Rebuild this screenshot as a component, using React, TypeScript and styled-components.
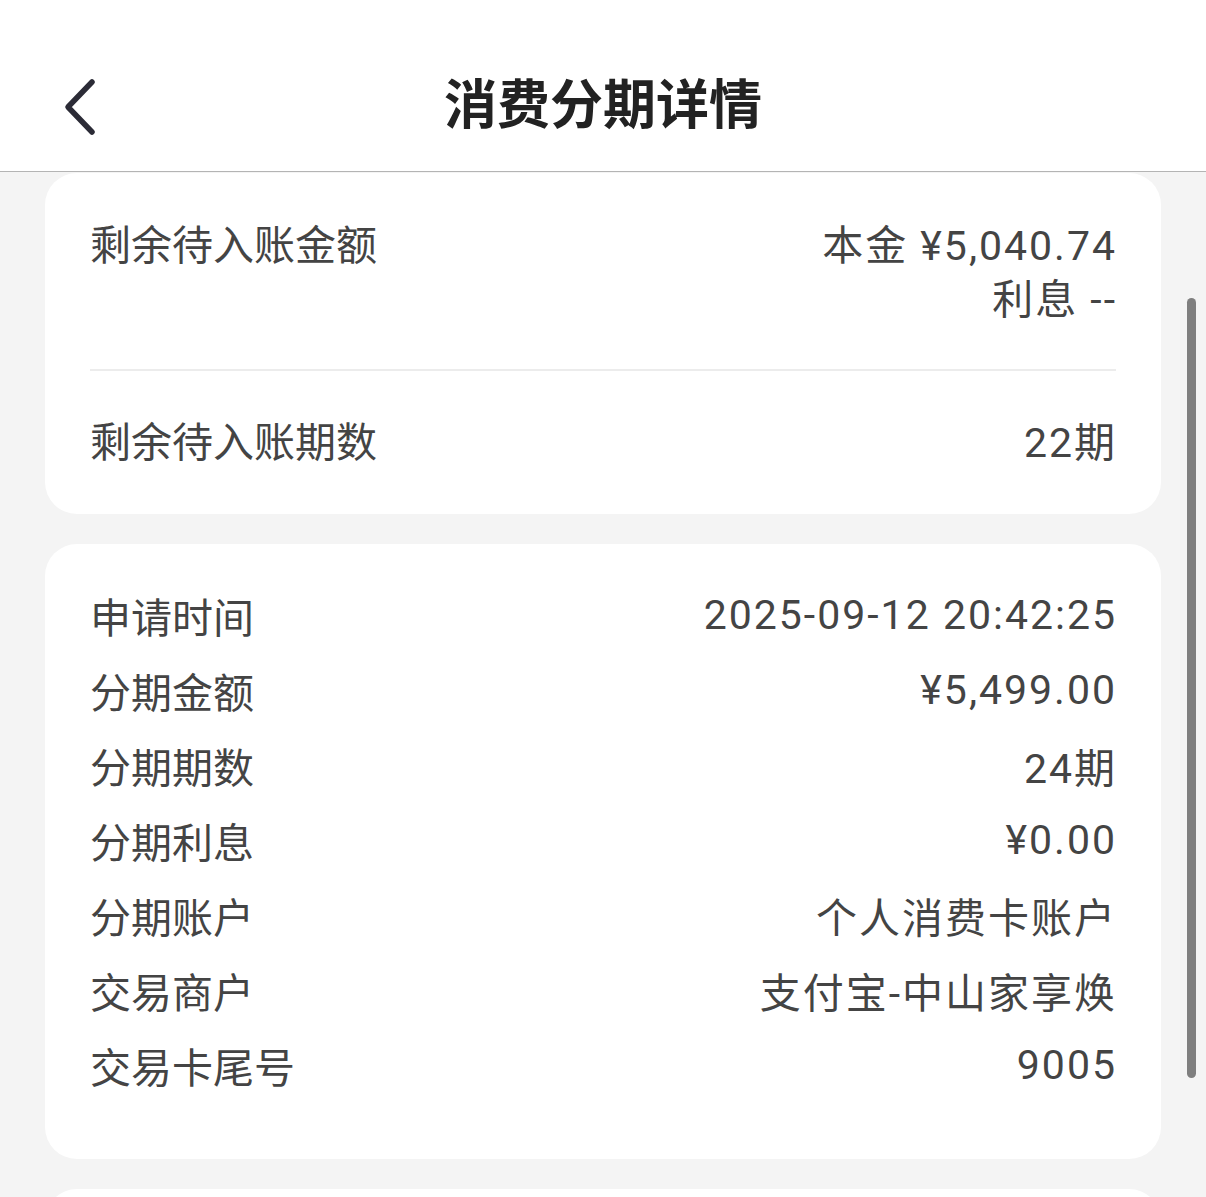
import styled, { createGlobalStyle } from 'styled-components'

const GlobalStyle = createGlobalStyle`
	html, body {
		margin: 0;
		padding: 0;
		background: #f4f4f4;
	}
	body {
		font-family: Roboto, 'Noto Sans CJK SC', sans-serif;
		color: #444;
	}
`

type DetailItem = {
	label: string
	value: string
}

const details: DetailItem[] = [
	{ label: '申请时间', value: '2025-09-12 20:42:25' },
	{ label: '分期金额', value: '¥5,499.00' },
	{ label: '分期期数', value: '24期' },
	{ label: '分期利息', value: '¥0.00' },
	{ label: '分期账户', value: '个人消费卡账户' },
	{ label: '交易商户', value: '支付宝-中山家享焕' },
	{ label: '交易卡尾号', value: '9005' },
]

export default function App() {
	return (
		<S.Page>
			<GlobalStyle />
			<S.Header>
				<S.BackButton aria-label="返回">
					<svg width="40" height="60" viewBox="0 0 40 60" fill="none">
						<path
							d="M32 6 L8 31 L32 56"
							stroke="#2b2b36"
							strokeWidth="5.5"
							strokeLinecap="round"
							strokeLinejoin="round"
						/>
					</svg>
				</S.BackButton>
				<S.Title>消费分期详情</S.Title>
			</S.Header>

			<S.Content>
				<S.Card>
					<S.SummaryRow>
						<S.Label>剩余待入账金额</S.Label>
						<S.ValueStack>
							<span>本金 ¥5,040.74</span>
							<span>利息 --</span>
						</S.ValueStack>
					</S.SummaryRow>
					<S.Divider />
					<S.SummaryRow $bottom>
						<S.Label>剩余待入账期数</S.Label>
						<S.Value>22期</S.Value>
					</S.SummaryRow>
				</S.Card>

				<S.DetailCard>
					{details.map((item) => (
						<S.DetailRow key={item.label}>
							<S.Label>{item.label}</S.Label>
							<S.Value>{item.value}</S.Value>
						</S.DetailRow>
					))}
				</S.DetailCard>

				<S.PeekCard />
			</S.Content>

			<S.ScrollThumb />
		</S.Page>
	)
}

const Page = styled.div`
	position: relative;
	width: 1206px;
	height: 1197px;
	overflow: hidden;
	background: #f4f4f4;
`

const Header = styled.header`
	display: flex;
	align-items: center;
	justify-content: center;
	position: relative;
	height: 172px;
	background: #fff;
	border-bottom: 1px solid #b4b4b4;
	padding-top: 38px;
	box-sizing: border-box;
`

const BackButton = styled.button`
	position: absolute;
	left: 60px;
	top: 76px;
	display: flex;
	padding: 0;
	border: none;
	background: none;
`

const Title = styled.h1`
	margin: 0;
	font-family: 'Noto Sans CJK SC', sans-serif;
	font-size: 53px;
	font-weight: 700;
	color: #222;
	line-height: 1;
	transform: translateY(-3px);
`

const Content = styled.main`
	display: flex;
	flex-direction: column;
	gap: 30px;
	padding: 1px 45px 0;
`

const Card = styled.section`
	background: #fff;
	border-radius: 32px;
	padding: 0 45px;
`

const SummaryRow = styled.div<{ $bottom?: boolean }>`
	display: flex;
	justify-content: space-between;
	align-items: flex-start;
	padding: ${(p) => (p.$bottom ? '45px 0 44px' : '46px 0 42px')};
	line-height: 54px;
`

const Label = styled.span`
	font-size: 41px;
	color: #444;
	line-height: inherit;
`

const Value = styled.span`
	font-size: 41px;
	color: #444;
	text-align: right;
	letter-spacing: 2px;
	margin-right: -1px;
`

const ValueStack = styled.div`
	display: flex;
	flex-direction: column;
	align-items: flex-end;
	font-size: 41px;
	color: #444;
	letter-spacing: 2px;
	margin-right: -1px;
`

const Divider = styled.hr`
	margin: 0;
	border: none;
	height: 2px;
	background: #ececec;
`

const DetailCard = styled(Card)`
	display: flex;
	flex-direction: column;
	padding-top: 33px;
	padding-bottom: 57px;
`

const DetailRow = styled.div`
	display: flex;
	justify-content: space-between;
	align-items: center;
	height: 75px;
`

const PeekCard = styled(Card)`
	height: 80px;
`

const ScrollThumb = styled.div`
	position: absolute;
	left: 1187px;
	top: 298px;
	width: 9px;
	height: 780px;
	border-radius: 5px;
	background: #7f7f7f;
`

const S = {
	Page,
	Header,
	BackButton,
	Title,
	Content,
	Card,
	SummaryRow,
	Label,
	Value,
	ValueStack,
	Divider,
	DetailCard,
	DetailRow,
	PeekCard,
	ScrollThumb,
}
